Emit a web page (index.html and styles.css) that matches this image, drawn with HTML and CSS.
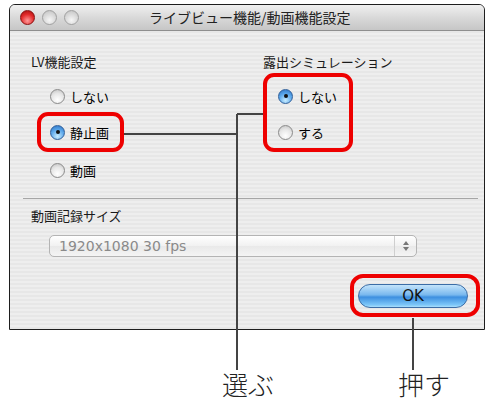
FILE: index.html
```html
<!DOCTYPE html>
<html lang="ja">
<head>
    <meta charset="UTF-8">
    <title>ライブビュー機能/動画機能設定</title>
    <link rel="stylesheet" href="styles.css">
</head>
<body>

    <div class="window">
        <div class="titlebar">
            <span class="light red"></span>
            <span class="light"></span>
            <span class="light"></span>
            <span class="title">ライブビュー機能/動画機能設定</span>
        </div>

        <div class="content">
            <div class="columns">
                <div class="col-left">
                    <div class="heading">LV機能設定</div>
                    <div class="radio-row first"><span class="radio"></span>しない</div>
                    <div class="mark mark-left">
                        <div class="radio-row"><span class="radio on"></span>静止画</div>
                    </div>
                    <div class="radio-row last"><span class="radio"></span>動画</div>
                </div>
                <div class="col-right">
                    <div class="heading">露出シミュレーション</div>
                    <div class="mark mark-right">
                        <div class="radio-row"><span class="radio on"></span>しない</div>
                        <div class="radio-row second"><span class="radio"></span>する</div>
                    </div>
                </div>
            </div>

            <hr class="separator">

            <div class="heading size-heading">動画記録サイズ</div>
            <div class="popup">
                <span class="popup-text">1920x1080 30 fps</span>
                <span class="stepper">
                    <svg width="8" height="14" viewBox="0 0 8 14">
                        <path d="M4 2 L7 6 H1 Z" fill="#777"/>
                        <path d="M4 12 L7 8 H1 Z" fill="#777"/>
                    </svg>
                </span>
            </div>

            <div class="ok-row">
                <div class="mark mark-ok">
                    <button class="ok">OK</button>
                </div>
            </div>
        </div>
    </div>

    <div class="captions">
        <span class="caption select">選ぶ</span>
        <span class="caption press">押す</span>
    </div>

    <!-- callout lines -->
    <svg class="callouts" width="487" height="403" viewBox="0 0 487 403">
        <path d="M124 134 H237 M237 114 H263 M237 114 V370 M413 318 V370" stroke="#444" stroke-width="2" fill="none"/>
    </svg>

</body>
</html>
```

FILE: styles.css
```css
body {
    margin: 0;
    width: 487px;
    height: 403px;
    background: #fff;
    font-family: "Noto Sans CJK JP", "DejaVu Sans", sans-serif;
    color: #111;
    position: relative;
    overflow: hidden;
}

.window {
    margin: 4px 0 0 9px;
    width: 476px;
    height: 326px;
    box-sizing: border-box;
    border: 1px solid #1e1e1e;
    border-radius: 6px 6px 0 0;
    background: repeating-linear-gradient(#eeeeee 0 2px, #e7e7e7 2px 4px);
    overflow: hidden;
}

.titlebar {
    height: 25px;
    border-bottom: 1px solid #8e8e8e;
    background: linear-gradient(#f0f0f0, #d9d9d9 50%, #c6c6c6);
    display: flex;
    align-items: center;
    padding-left: 10px;
    position: relative;
}

.light {
    width: 15px;
    height: 15px;
    border-radius: 50%;
    margin-right: 7px;
    box-sizing: border-box;
    border: 1px solid #a0a0a0;
    background: radial-gradient(circle at 50% 70%, #f6f6f6, #d0d0d0 70%, #b5b5b5);
}

.light.red {
    border-color: #8a1010;
    background: radial-gradient(circle at 50% 75%, #ff9a9a, #e22a2a 55%, #a01010);
}

.title {
    position: absolute;
    left: 139px;
    top: 3px;
    font-size: 14px;
    line-height: 19px;
    color: #222;
}

.content {
    padding-left: 21px;
}

.columns {
    display: flex;
}

.col-left {
    width: 232px;
}

.heading {
    font-size: 13px;
    line-height: 16px;
    margin-top: 23px;
    color: #1a1a1a;
}

.radio-row {
    display: flex;
    align-items: center;
    height: 20px;
    font-size: 13px;
    color: #000;
}

.radio {
    width: 15px;
    height: 15px;
    box-sizing: border-box;
    border-radius: 50%;
    border: 1px solid #8a8a8a;
    background: radial-gradient(circle at 50% 75%, #ffffff, #e6e6e6 55%, #bdbdbd);
    margin-right: 5px;
    position: relative;
}

.radio.on {
    border-color: #2f5f9a;
    background: radial-gradient(circle at 50% 80%, #c7ecff, #5aa6ea 55%, #2a6fc0);
}

.radio.on::after {
    content: "";
    position: absolute;
    left: 4.5px;
    top: 4.5px;
    width: 4px;
    height: 4px;
    border-radius: 50%;
    background: #111;
}

.col-left .radio-row.first {
    margin-top: 16px;
    padding-left: 19px;
}

.col-left .radio-row.last {
    margin-top: 8px;
    padding-left: 19px;
}

.mark {
    border: 4px solid #ee0000;
    border-radius: 11px;
    box-sizing: border-box;
}

.mark-left {
    width: 87px;
    height: 40px;
    margin: 6px 0 0 6px;
    padding: 6px 0 0 9px;
}

.mark-right {
    width: 90px;
    height: 79px;
    margin-top: 3px;
    padding: 9px 0 0 11px;
}

.mark-right .second {
    margin-top: 16px;
}

.separator {
    border: none;
    border-top: 1px solid #a6a6a6;
    margin: 18px 0 0 -8px;
    width: 455px;
}

.size-heading {
    margin-top: 9px;
}

.popup {
    margin: 11px 0 0 18px;
    width: 368px;
    height: 22px;
    box-sizing: border-box;
    border: 1px solid #b4b4b4;
    border-radius: 5px;
    background: linear-gradient(#ffffff, #f1f1f1 50%, #e9e9e9 51%, #f4f4f4);
    display: flex;
    align-items: center;
}

.popup-text {
    flex: 1;
    padding-left: 9px;
    font-family: "DejaVu Sans", sans-serif;
    font-size: 14px;
    color: #8a8a8a;
}

.stepper {
    width: 21px;
    height: 20px;
    border-left: 1px solid #cfcfcf;
    display: flex;
    align-items: center;
    justify-content: center;
}

.ok-row {
    display: flex;
    justify-content: flex-end;
    margin-top: 17px;
    padding-right: 4px;
}

.mark-ok {
    width: 130px;
    height: 43px;
    border-radius: 13px;
    padding: 6px 0 0 4px;
}

.ok {
    display: block;
    width: 110px;
    height: 24px;
    border: 1px solid #3c6da6;
    border-radius: 12px;
    background: linear-gradient(#c4e4fb, #78b8ee 45%, #3d8fe0 55%, #7cc6f8 90%, #a8defc);
    font-family: "DejaVu Sans", sans-serif;
    font-size: 15px;
    color: #111;
    padding: 0;
}

.captions {
    display: flex;
    margin-top: 38px;
    font-size: 26px;
    line-height: 32px;
    font-weight: 300;
    color: #222;
}

.select {
    margin-left: 222px;
}

.press {
    margin-left: 124px;
}

.callouts {
    position: absolute;
    left: 0;
    top: 0;
}
```
